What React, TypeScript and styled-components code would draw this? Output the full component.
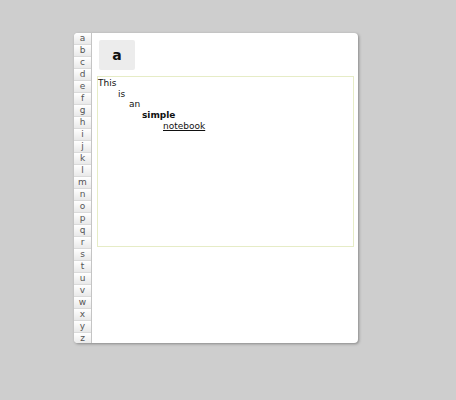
import React from 'react';
import styled, { createGlobalStyle } from 'styled-components';

const GlobalStyle = createGlobalStyle`
  html, body {
    margin: 0;
    padding: 0;
    background: #cecece;
    font-family: "DejaVu Sans", Verdana, sans-serif;
  }
`;

const Page = styled.div`
  width: 456px;
  height: 400px;
  padding: 33px 0 0 74px;
  box-sizing: border-box;
`;

const Panel = styled.div`
  width: 284px;
  height: 310px;
  background: #fff;
  border-radius: 4px;
  box-shadow: 1px 1px 3px rgba(0, 0, 0, 0.35);
  display: flex;
  overflow: hidden;
`;

const Index = styled.ul`
  list-style: none;
  margin: 0;
  padding: 0;
  width: 17px;
  border-right: 1px solid #c4c4c4;
  display: flex;
  flex-direction: column;
`;

const IndexItem = styled.li`
  height: 12px;
  box-sizing: border-box;
  border-bottom: 1px solid #dadada;
  background: linear-gradient(#ffffff, #e9e9e9);
  color: #555;
  font-size: 9px;
  line-height: 11px;
  text-align: center;
`;

const Body = styled.div`
  flex: 1;
  padding: 7px 4px 0 5px;
  display: flex;
  flex-direction: column;
`;

const Tab = styled.div`
  width: 36px;
  height: 30px;
  margin-left: 2px;
  background: #ececec;
  border-radius: 2px;
  display: flex;
  align-items: center;
  justify-content: center;
  font-size: 14px;
  font-weight: bold;
  color: #111;
`;

const Notebook = styled.div`
  margin-top: 6px;
  height: 171px;
  border: 1px solid #e6ecc6;
  box-sizing: border-box;
  padding: 1px 0 0 0;
  font-size: 9px;
  line-height: 10.7px;
  color: #111;
`;

const Line = styled.div<{ $indent: number; $bold?: boolean; $underline?: boolean }>`
  padding-left: ${p => p.$indent}px;
  font-weight: ${p => (p.$bold ? 'bold' : 'normal')};
  text-decoration: ${p => (p.$underline ? 'underline' : 'none')};
`;

const letters = 'abcdefghijklmnopqrstuvwxyz'.split('');

const lines = [
  { text: 'This', indent: 0 },
  { text: 'is', indent: 20 },
  { text: 'an', indent: 31 },
  { text: 'simple', indent: 44, bold: true },
  { text: 'notebook', indent: 65, underline: true },
];

export default function App() {
  return (
    <Page>
      <GlobalStyle />
      <Panel>
        <Index>
          {letters.map(l => (
            <IndexItem key={l}>{l}</IndexItem>
          ))}
        </Index>
        <Body>
          <Tab>a</Tab>
          <Notebook>
            {lines.map(l => (
              <Line key={l.text} $indent={l.indent} $bold={l.bold} $underline={l.underline}>
                {l.text}
              </Line>
            ))}
          </Notebook>
        </Body>
      </Panel>
    </Page>
  );
}
